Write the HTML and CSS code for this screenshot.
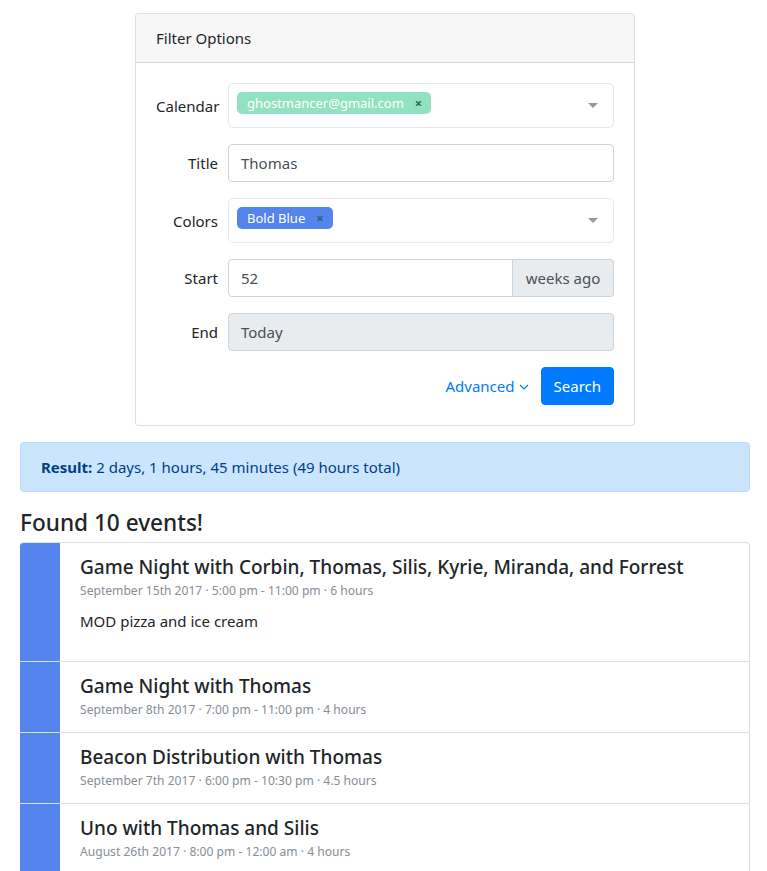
FILE: index.html
```html
<!DOCTYPE html>
<html>
<head>
<meta charset="utf-8">
<link rel="stylesheet" href="styles.css">
</head>
<body>
<div class="page">
  <div class="card">
    <div class="card-header">Filter Options</div>
    <div class="card-body">
      <div class="form-row">
        <label class="form-label">Calendar</label>
        <div class="multiselect">
          <div class="tags">
            <span class="tag tag-green">ghostmancer@gmail.com<span class="tag-x">×</span></span>
          </div>
          <span class="caret"></span>
        </div>
      </div>
      <div class="form-row">
        <label class="form-label">Title</label>
        <div class="input">Thomas</div>
      </div>
      <div class="form-row">
        <label class="form-label">Colors</label>
        <div class="multiselect">
          <div class="tags">
            <span class="tag tag-blue">Bold Blue<span class="tag-x">×</span></span>
          </div>
          <span class="caret"></span>
        </div>
      </div>
      <div class="form-row">
        <label class="form-label">Start</label>
        <div class="input-group">
          <div class="input input-left">52</div>
          <div class="input-append">weeks ago</div>
        </div>
      </div>
      <div class="form-row">
        <label class="form-label">End</label>
        <div class="input input-disabled">Today</div>
      </div>
      <div class="actions">
        <a class="link">Advanced <svg class="chev" width="10" height="6" viewBox="0 0 10 6"><path d="M1 1 L5 5 L9 1" fill="none" stroke="#007bff" stroke-width="1.2"/></svg></a>
        <button class="btn">Search</button>
      </div>
    </div>
  </div>

  <div class="alert"><strong>Result:</strong> 2 days, 1 hours, 45 minutes (49 hours total)</div>

  <h4 class="found">Found 10 events!</h4>

  <div class="list">
    <div class="item">
      <div class="bar"></div>
      <div class="item-body">
        <h5 class="item-title">Game Night with Corbin, Thomas, Silis, Kyrie, Miranda, and Forrest</h5>
        <div class="meta">September 15th 2017 · 5:00 pm - 11:00 pm · 6 hours</div>
        <p class="desc">MOD pizza and ice cream</p>
      </div>
    </div>
    <div class="item">
      <div class="bar"></div>
      <div class="item-body">
        <h5 class="item-title">Game Night with Thomas</h5>
        <div class="meta">September 8th 2017 · 7:00 pm - 11:00 pm · 4 hours</div>
      </div>
    </div>
    <div class="item">
      <div class="bar"></div>
      <div class="item-body">
        <h5 class="item-title">Beacon Distribution with Thomas</h5>
        <div class="meta">September 7th 2017 · 6:00 pm - 10:30 pm · 4.5 hours</div>
      </div>
    </div>
    <div class="item">
      <div class="bar"></div>
      <div class="item-body">
        <h5 class="item-title">Uno with Thomas and Silis</h5>
        <div class="meta">August 26th 2017 · 8:00 pm - 12:00 am · 4 hours</div>
      </div>
    </div>
    <div class="item">
      <div class="bar"></div>
      <div class="item-body">
        <h5 class="item-title">Game Night with Thomas</h5>
        <div class="meta">August 18th 2017 · 7:00 pm - 11:00 pm · 4 hours</div>
      </div>
    </div>
  </div>
</div>
</body>
</html>
```

FILE: styles.css
```css
* { box-sizing: border-box; }
html, body { margin: 0; padding: 0; background: #fff; }
body {
  font-family: "Noto Sans", "Open Sans", sans-serif;
  font-size: 15px;
  line-height: 24px;
  color: #212529;
}
.page {
  padding: 13px 17px 40px 20px;
}
.card {
  width: 500px;
  margin: 0 auto 16px;
  border: 1px solid rgba(0,0,0,.125);
  border-radius: 4px;
  background: #fff;
}
.card-header {
  background: #f7f7f7;
  border-bottom: 1px solid rgba(0,0,0,.125);
  padding: 12px 20px;
  border-radius: 4px 4px 0 0;
}
.card-body {
  padding: 20px;
  display: flex;
  flex-direction: column;
  gap: 16px;
}
.form-row {
  display: flex;
  align-items: center;
}
.form-label {
  width: 72px;
  flex: none;
  text-align: right;
  padding-right: 10px;
}
.multiselect {
  flex: 1;
  min-height: 45px;
  border: 1px solid #e8e8e8;
  border-radius: 5px;
  display: flex;
  align-items: flex-start;
  padding: 8px 15px 8px 8px;
}
.tags { flex: 1; display: flex; }
.tag {
  display: inline-flex;
  align-items: center;
  height: 22px;
  padding: 0 9px 0 10px;
  border-radius: 5px;
  color: #fff;
  font-size: 13px;
  line-height: 1;
}
.tag-green { background: #92e1c0; }
.tag-blue { background: #5484ed; }
.tag-x {
  margin-left: 11px;
  font-weight: bold;
  font-size: 13px;
  color: #266d4d;
}
.caret {
  width: 0; height: 0;
  border-left: 5px solid transparent;
  border-right: 5px solid transparent;
  border-top: 5px solid #999;
  margin-top: 11px;
}
.input {
  flex: 1;
  height: 38px;
  border: 1px solid #ced4da;
  border-radius: 4px;
  padding: 6px 12px;
  color: #495057;
}
.input-disabled { background: #e9ecef; }
.input-group { flex: 1; display: flex; }
.input-left { border-radius: 4px 0 0 4px; }
.input-append {
  flex: none;
  height: 38px;
  width: 101px;
  padding: 6px 12px;
  background: #e9ecef;
  border: 1px solid #ced4da;
  border-left: 0;
  border-radius: 0 4px 4px 0;
  color: #495057;
  text-align: center;
  white-space: nowrap;
}
.actions {
  display: flex;
  justify-content: flex-end;
  align-items: center;
  gap: 12px;
}
.link {
  color: #007bff;
  display: inline-flex;
  align-items: center;
  gap: 4px;
}
.chev { margin-top: 2px; }
.btn {
  font: inherit;
  color: #fff;
  background: #007bff;
  border: 1px solid #007bff;
  border-radius: 4px;
  height: 38px;
  padding: 0 12px;
}
.alert {
  background: #cce5ff;
  border: 1px solid #b8daff;
  color: #004085;
  border-radius: 4px;
  padding: 12px 20px;
  line-height: 24px;
  margin-bottom: 16px;
}
.alert strong { font-weight: bold; }
.found {
  margin: 0 0 5px;
  font-size: 22.6px;
  font-weight: 500;
  line-height: 29px;
}
.list {
  border: 1px solid rgba(0,0,0,.125);
  border-left: 0;
  border-radius: 4px;
  overflow: hidden;
}
.item {
  display: flex;
  border-top: 1px solid rgba(0,0,0,.125);
}
.item:first-child { border-top: 0; }
.bar {
  width: 40px;
  flex: none;
  background: #5484ed;
}
.item-body {
  flex: 1;
  padding: 12px 20px 12px;
}
.item-title {
  margin: 0;
  font-size: 19px;
  font-weight: 500;
  line-height: 24px;
}
.meta {
  margin-top: 2px;
  font-size: 12.1px;
  color: #868e96;
  line-height: 20px;
}
.desc {
  margin: 8px 0 16px;
  line-height: 24px;
}
```
